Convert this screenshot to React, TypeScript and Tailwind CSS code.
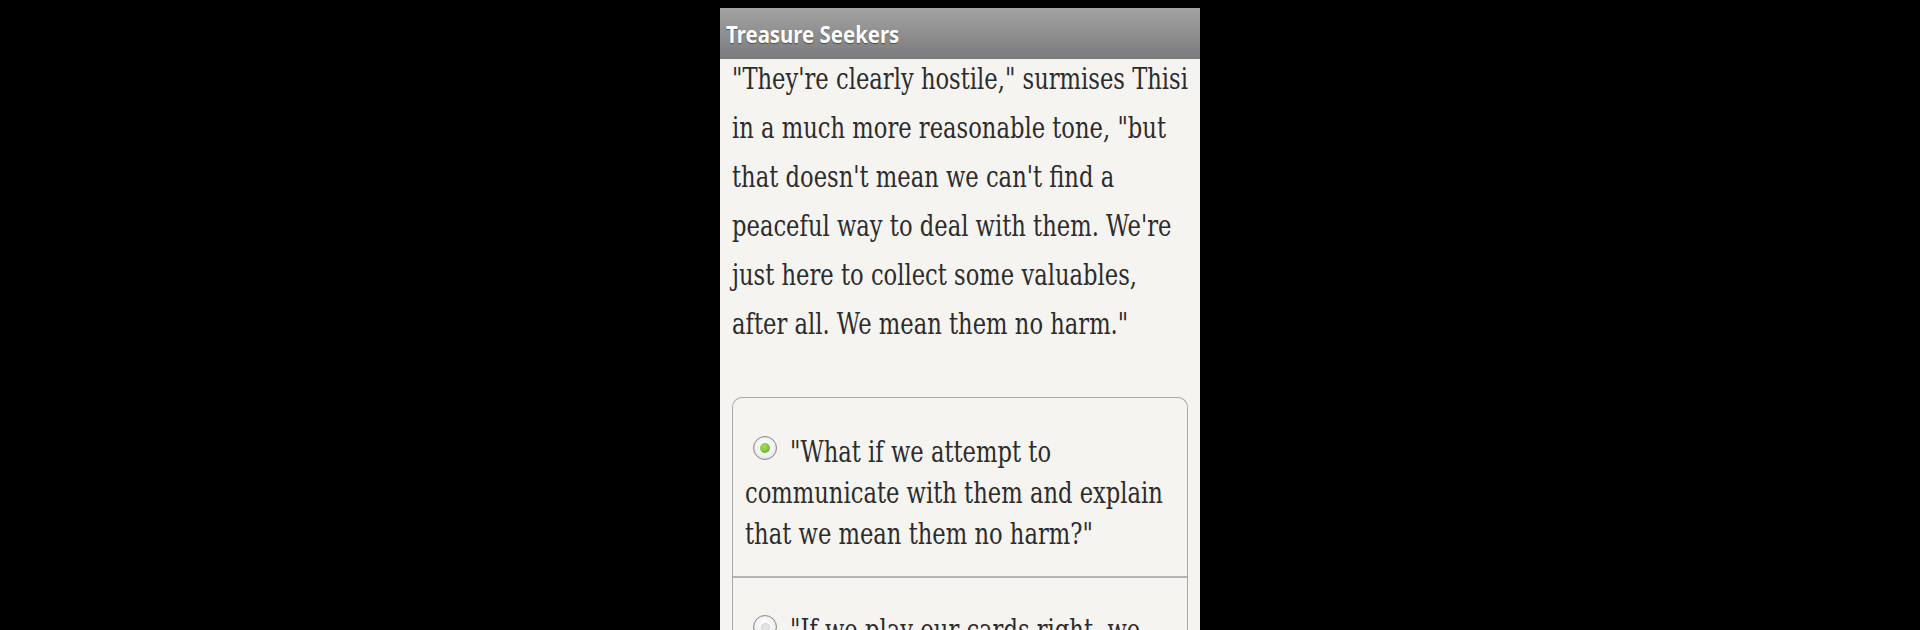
import React from "react";

const serif = "font-['DejaVu_Serif','Liberation_Serif',serif]";

function Radio({ checked }: { checked: boolean }) {
  return (
    <span className="flex h-[24px] w-[24px] shrink-0 items-center justify-center rounded-full border-[1.5px] border-[#8c8c8c] bg-[radial-gradient(circle_at_50%_40%,#ffffff_0%,#f2f2f2_55%,#d6d6d6_100%)] shadow-[inset_0_0_1px_rgba(0,0,0,0.25)]">
      {checked ? (
        <span className="h-[10px] w-[10px] rounded-full bg-[radial-gradient(circle_at_40%_35%,#a8e05a_0%,#7cc03a_60%,#5e9a28_100%)]" />
      ) : (
        <span className="h-[9px] w-[9px] rounded-full bg-[#e4e4e4] border border-[#d0d0d0]" />
      )}
    </span>
  );
}

function Line({ children, className = "" }: { children: React.ReactNode; className?: string }) {
  return (
    <div className={`whitespace-nowrap origin-left scale-x-[0.755] ${className}`}>{children}</div>
  );
}

export default function App() {
  const para = [
    "\"They're clearly hostile,\" surmises Thisi",
    "in a much more reasonable tone, \"but",
    "that doesn't mean we can't find a",
    "peaceful way to deal with them. We're",
    "just here to collect some valuables,",
    "after all. We mean them no harm.\"",
  ];

  return (
    <div className="h-[630px] w-full overflow-hidden bg-black flex justify-center pt-2">
      <div className="w-[480px] flex flex-col bg-[#f6f4f1]">
        <header className="h-[51px] shrink-0 flex items-center pl-[6px] bg-gradient-to-b from-[#a3a3a3] via-[#8f8f8f] to-[#7b7b7b]">
          <span className="block whitespace-nowrap origin-left scale-x-[0.85] font-['Noto_Sans','Open_Sans',sans-serif] font-bold text-[24px] text-white [text-shadow:0_1px_1px_rgba(0,0,0,0.45)]">
            Treasure Seekers
          </span>
        </header>

        <div className={`${serif} px-3 -mt-[5px] text-[30px] leading-[49px] text-[#2c2c2c]`}>
          {para.map((l) => (
            <Line key={l}>{l}</Line>
          ))}
        </div>

        <div className={`${serif} mx-3 mt-[49px] rounded-t-[10px] border-[1.5px] border-b-0 border-[#a9a9a9] text-[30px] leading-[41px] text-[#2c2c2c]`}>
          <div className="pl-3 pt-[33px] pb-[22px]">
            <div className="flex items-start">
              <span className="ml-[8px] mt-[5px]">
                <Radio checked />
              </span>
              <Line className="ml-[13px]">"What if we attempt to</Line>
            </div>
            <Line>communicate with them and explain</Line>
            <Line>that we mean them no harm?"</Line>
          </div>
          <div className="h-[2px] bg-[#b4b4b4]" />
          <div className="pl-3 pt-[31px] pb-[22px]">
            <div className="flex items-start">
              <span className="ml-[8px] mt-[6px]">
                <Radio checked={false} />
              </span>
              <Line className="ml-[13px]">"If we play our cards right, we</Line>
            </div>
            <Line>might be able to sneak past them</Line>
            <Line>without a fight."</Line>
          </div>
        </div>
      </div>
    </div>
  );
}
